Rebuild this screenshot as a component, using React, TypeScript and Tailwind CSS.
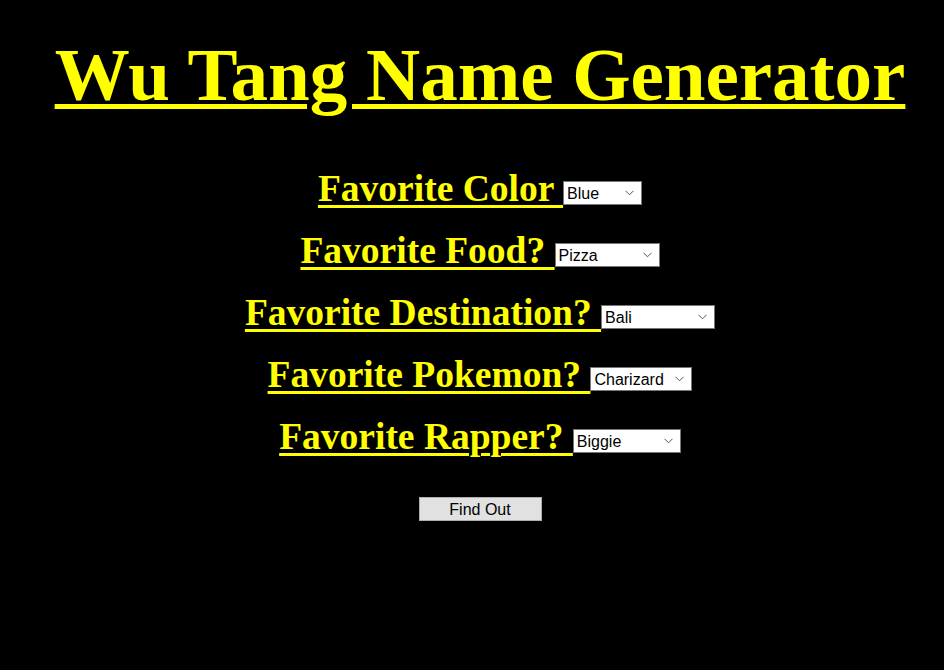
const Chevron = () => (
  <svg className="absolute right-[7px] top-1/2 -translate-y-1/2" width="9" height="6" viewBox="0 0 9 6" fill="none">
    <path d="M0.5 0.8 L4.5 4.8 L8.5 0.8" stroke="#555" strokeWidth="1" />
  </svg>
);

const Picker = ({ value, width }: { value: string; width: string }) => (
  <span className={`relative mt-[8px] inline-flex items-center h-[24px] ${width} bg-white border border-[#767676]`}>
    <span className="pl-[3px] pt-[2px] text-[16px] leading-none text-black font-['Liberation_Sans',sans-serif]">{value}</span>
    <Chevron />
  </span>
);

const App = () => {
  const questions = [
    { label: 'Favorite Color', value: 'Blue', width: 'w-[79px]' },
    { label: 'Favorite Food?', value: 'Pizza', width: 'w-[105px]' },
    { label: 'Favorite Destination?', value: 'Bali', width: 'w-[114px]' },
    { label: 'Favorite Pokemon?', value: 'Charizard', width: 'w-[102px]' },
    { label: 'Favorite Rapper?', value: 'Biggie', width: 'w-[108px]' },
  ];

  return (
    <div className="min-h-[670px] bg-black pl-4 text-center font-['Liberation_Serif',serif]">
      <h1 className="pt-[30px] text-[75px] font-bold leading-[90px] text-[#ffff00] underline decoration-[5px] underline-offset-[4px]">
        Wu Tang Name Generator
      </h1>

      {/* Questions */}
      <div className="mt-[50px] flex flex-col items-center gap-[24px]">
        {questions.map((q) => (
          <div key={q.label} className="flex items-center h-[38px]">
            <span className="text-[37.5px] font-bold text-[#ffff00] underline decoration-[3px] underline-offset-[4px] whitespace-pre">
              {q.label + ' '}
            </span>
            <Picker value={q.value} width={q.width} />
          </div>
        ))}
      </div>

      <div className="mt-[41px]">
        <button className="w-[123px] h-[24px] bg-[#e1e1e1] border border-[#adadad] text-[16px] text-black font-['Liberation_Sans',sans-serif]">
          Find Out
        </button>
      </div>
    </div>
  );
};

export default App;
